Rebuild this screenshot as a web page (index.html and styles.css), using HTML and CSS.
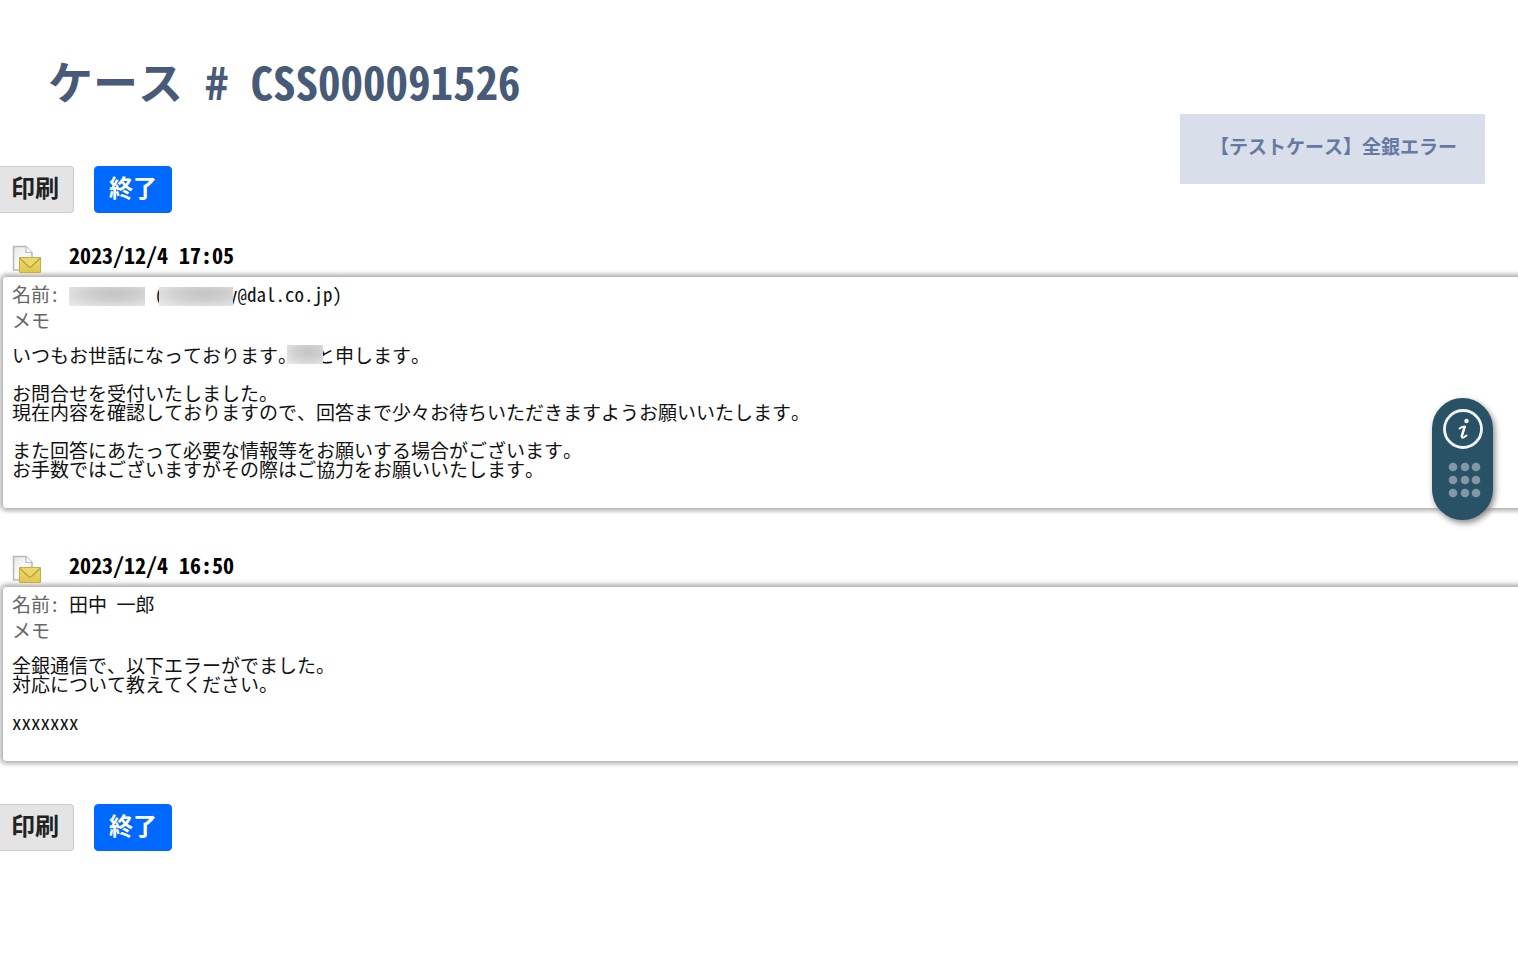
FILE: index.html
```html
<!DOCTYPE html>
<html lang="ja">
<head>
<meta charset="utf-8">
<title>ケース # CSS000091526</title>
<meta name="viewport" content="width=device-width, initial-scale=1">
<link rel="stylesheet" href="styles.css">
</head>
<body>
<svg class="defs" width="0" height="0" aria-hidden="true">
  <defs>
    <linearGradient id="paper" x1="0" y1="0" x2="1" y2="1">
      <stop offset="0" stop-color="#e4e4e4"/>
      <stop offset=".5" stop-color="#fbfbfb"/>
      <stop offset="1" stop-color="#dedede"/>
    </linearGradient>
    <linearGradient id="envelope" x1="0" y1="0" x2="0" y2="1">
      <stop offset="0" stop-color="#f0dc72"/>
      <stop offset="1" stop-color="#dfc64c"/>
    </linearGradient>
    <symbol id="mail-doc" viewBox="0 0 30 30">
      <path d="M1.500 1.500H14L20 7.500V25H1.500Z" fill="url(#paper)" stroke="#b9b9b9" stroke-width="1.500"/>
      <path d="M14 1.500V7.500H20" fill="#fff" stroke="#b9b9b9" stroke-width="1.200"/>
      <path d="M7.500 12.500H28.500V27.500H7.500Z" fill="url(#envelope)" stroke="#c6ae42"/>
      <path d="M7.500 13L16.500 21.500Q18 22.700 19.500 21.500L28.500 13" fill="#ecd869" stroke="#b79f39" stroke-width="1.200"/>
    </symbol>
  </defs>
</svg>
<header class="page-header">
  <div class="heading">
    <h1 class="title">ケース # CSS000091526</h1>
    <div class="actions">
      <button type="button" class="btn btn-print">印刷</button>
      <button type="button" class="btn btn-close">終了</button>
    </div>
  </div>
  <p class="subject">【テストケース】全銀エラー</p>
</header>

<main class="thread">
  <article class="entry">
    <div class="entry-head">
      <svg class="entry-icon" aria-hidden="true"><use href="#mail-doc"/></svg>
      <h2 class="date">2023/12/4 17:05</h2>
    </div>
    <div class="card">
      <p class="meta"><span class="label">名前:</span> <span class="mask mask-name"></span> (<span class="mask mask-mail"></span>y@dal.co.jp)</p>
      <p class="meta label">メモ</p>
      <div class="message">いつもお世話になっております。<span class="mask mask-short"></span>と申します。

お問合せを受付いたしました。
現在内容を確認しておりますので、回答まで少々お待ちいただきますようお願いいたします。

また回答にあたって必要な情報等をお願いする場合がございます。
お手数ではございますがその際はご協力をお願いいたします。</div>
    </div>
  </article>

  <article class="entry">
    <div class="entry-head">
      <svg class="entry-icon" aria-hidden="true"><use href="#mail-doc"/></svg>
      <h2 class="date">2023/12/4 16:50</h2>
    </div>
    <div class="card">
      <p class="meta"><span class="label">名前:</span> 田中 一郎</p>
      <p class="meta label">メモ</p>
      <div class="message">全銀通信で、以下エラーがでました。
対応について教えてください。

xxxxxxx</div>
    </div>
  </article>
</main>

<footer class="actions">
  <button type="button" class="btn btn-print">印刷</button>
  <button type="button" class="btn btn-close">終了</button>
</footer>

<aside class="widget">
  <button type="button" class="widget-btn" aria-label="情報">
    <svg width="42" height="42" viewBox="0 0 42 42" aria-hidden="true">
      <circle cx="21" cy="21" r="18.500" fill="none" stroke="#f2f6f8" stroke-width="2.800"/>
      <circle cx="24.500" cy="13" r="2.200" fill="#fff"/>
      <path d="M17.500 20.500Q20 18.500 23 18.500L20 28Q19.400 30.500 21.500 29.500L24.500 27.500" fill="none" stroke="#fff" stroke-width="1.800" stroke-linecap="round" stroke-linejoin="round"/>
      <path d="M22.500 19L19.500 29" fill="none" stroke="#fff" stroke-width="2.400"/>
    </svg>
  </button>
  <button type="button" class="widget-btn" aria-label="メニュー">
    <svg width="36" height="36" viewBox="0 0 36 36" fill="#8298a6" aria-hidden="true">
      <circle cx="8" cy="5" r="4.300"/><circle cx="20" cy="5" r="4.300"/><circle cx="31" cy="5" r="4.300"/>
      <circle cx="8" cy="18" r="4.300"/><circle cx="20" cy="18" r="4.300"/><circle cx="31" cy="18" r="4.300"/>
      <circle cx="8" cy="31" r="4.300"/><circle cx="20" cy="31" r="4.300"/><circle cx="31" cy="31" r="4.300"/>
    </svg>
  </button>
</aside>
</body>
</html>
```
FILE: styles.css
```css
* {
  box-sizing: border-box;
}

body {
  margin: 0;
  overflow-x: hidden;
  background: #fff;
  color: #111;
  font: 19px/19px "Noto Sans Mono CJK JP", "Noto Sans CJK JP", monospace;
  font-feature-settings: "hwid";
}

h1, h2, p {
  margin: 0;
}

.defs {
  position: absolute;
}

.page-header {
  display: flex;
  justify-content: space-between;
  align-items: flex-start;
  padding: 54px 33px 0 0;
}

.title {
  padding-left: 48px;
  color: #475a78;
  font-size: 45px;
  font-weight: 700;
  line-height: 54px;
}

.heading .actions {
  margin-top: 58px;
}

.subject {
  margin-top: 60px;
  padding: 20px 28px 26px 30px;
  background: #d8deea;
  color: #6679a3;
  line-height: 24px;
  font-weight: 700;
}

.actions {
  display: flex;
  gap: 20px;
}

.btn {
  height: 47px;
  padding: 0 14px 6px;
  border: 1px solid #0069ff;
  border-radius: 4px;
  font: inherit;
  font-size: 24px;
  font-weight: 700;
  line-height: 24px;
}

.btn-print {
  padding-left: 11px;
  border-color: #ccc;
  border-left: 0;
  border-radius: 0 4px 4px 0;
  background: #e4e4e4;
  color: #222;
}

.btn-close {
  background: #0069ff;
  color: #fff;
}

.thread {
  display: grid;
  gap: 43px;
  padding: 29px 0 42px 2px;
}

.entry-head {
  display: flex;
  align-items: flex-start;
  gap: 27px;
  height: 34px;
  padding-left: 10px;
}

.entry-icon {
  width: 30px;
  height: 30px;
  margin-top: 3px;
}

.date {
  color: #000;
  font-size: 22px;
  line-height: 24px;
}

.card {
  margin-right: -8px;
  padding: 4px 10px 30px 9px;
  border: 1px solid #bbb;
  border-radius: 4px;
  box-shadow: 0 0 4px 2px #b4b4b4;
}

.meta {
  line-height: 26px;
}

.label {
  color: #666;
}

.message {
  margin-top: 12px;
  white-space: pre-wrap;
}

.mask {
  display: inline-block;
  position: relative;
  height: 19px;
  background: radial-gradient(ellipse at 60% 35%, #c4c4c4, #cfcfcf 40%, #ececec);
}

.mask-name {
  width: 76px;
  vertical-align: middle;
}

.mask-mail {
  width: 74px;
  margin-left: -5px;
  margin-right: -5px;
  vertical-align: middle;
}

.mask-short {
  width: 36px;
  margin-left: -10px;
  margin-right: -7px;
  vertical-align: bottom;
}

.widget {
  position: absolute;
  top: 398px;
  right: 25px;
  display: flex;
  flex-direction: column;
  align-items: center;
  gap: 12px;
  padding: 10px 9px 22px 10px;
  border-radius: 31px;
  background: #2a5266;
  box-shadow: 2px 3px 6px #888;
}

.widget-btn {
  display: block;
  padding: 0;
  border: 0;
  background: none;
}

.widget-btn svg {
  display: block;
}
```
